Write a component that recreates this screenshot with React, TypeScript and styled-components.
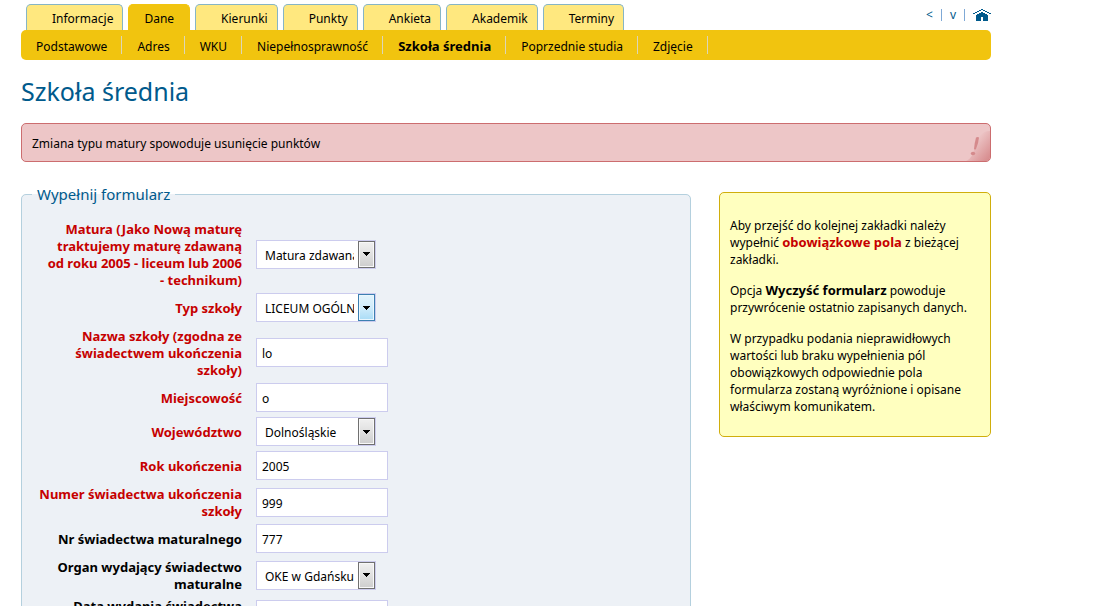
import React from 'react';
import styled, { createGlobalStyle } from 'styled-components';

const GlobalStyle = createGlobalStyle`
  *, *::before, *::after { box-sizing: border-box; }
  body {
    margin: 0;
    background: #fff;
    color: #000;
    font: 12px/17px Tahoma, "Noto Sans", sans-serif;
  }
  a { color: inherit; text-decoration: none; }
  strong { font-size: 13px; line-height: 1; }
`;

const Page = styled.div`
  padding: 4px 113px 24px 21px;
`;

const TopBar = styled.header`
  display: flex;
  justify-content: space-between;
  align-items: flex-start;
`;

const Tabs = styled.nav`
  display: flex;
  gap: 5px;
  padding-left: 5px;
`;

const Tab = styled.a<{ $active?: boolean }>`
  height: 26px;
  padding: ${p => (p.$active ? '5px 15px 0' : '5px 9px 0 25px')};
  border: 1px solid ${p => (p.$active ? '#f1c40f' : '#86b5c5')};
  border-bottom: 0;
  border-radius: 5px 5px 0 0;
  background: ${p => (p.$active ? '#f1c40f' : '#ffe87f')};
`;

const Tools = styled.nav`
  display: flex;
  align-items: center;
  gap: 8px;
  height: 22px;
  color: #005a8c;

  a { display: block; line-height: 12px; }
  a + a { padding-left: 8px; border-left: 1px solid #7fa9d6; }
`;

const SubNav = styled.nav`
  display: flex;
  align-items: center;
  height: 30px;
  border-radius: 5px;
  background: #f1c40f;
`;

const SubLink = styled.a<{ $active?: boolean }>`
  height: 18px;
  padding: 2px 14px 0 15px;
  border-right: 1px solid #dcd6b8;
  font-size: ${p => (p.$active ? '13px' : '12px')};
  font-weight: ${p => (p.$active ? 'bold' : 'normal')};
`;

const Title = styled.h1`
  margin: 15px 0 16px;
  color: #005a8c;
  font-size: 25px;
  font-weight: normal;
  line-height: 32px;
`;

const Alert = styled.div`
  display: flex;
  justify-content: space-between;
  height: 39px;
  border: 1px solid #cc6d6f;
  border-radius: 5px;
  background: #edc6c7;
  overflow: hidden;

  p { margin: 0; padding: 11px 10px 0; }
`;

const Columns = styled.div`
  display: flex;
  align-items: flex-start;
  gap: 28px;
  margin-top: 24px;
`;

const Form = styled.form`
  flex: 1;
  min-width: 0;
`;

const Fieldset = styled.fieldset`
  display: block;
  min-width: 0;
  margin: 0;
  padding: 17px 20px 20px 10px;
  border: 1px solid #b4d0de;
  border-radius: 5px;
  background: #edf1f6;
`;

const Legend = styled.legend`
  padding: 0 5px;
  color: #005a8c;
  font-size: 15px;
  line-height: 17px;
`;

const Rows = styled.div`
  display: grid;
  gap: 5px;
`;

const Row = styled.div`
  display: grid;
  grid-template-columns: 210px 1fr;
  align-items: center;
  gap: 14px;
`;

const Label = styled.label<{ $required?: boolean }>`
  margin-bottom: -1px;
  padding: 1px 0 0 6px;
  color: ${p => (p.$required ? '#c60000' : '#000')};
  font-size: 13px;
  font-weight: bold;
  text-align: right;
`;

const NoWrap = styled.span`
  white-space: nowrap;
`;

const TextInput = styled.input`
  width: 132px;
  height: 29px;
  padding: 2px 5px 0;
  border: 1px solid #ccccee;
  background: #fff;
  color: #000;
  font: inherit;
`;

const SelectBox = styled.div`
  position: relative;
  width: 120px;
  height: 29px;
`;

const Select = styled.select`
  appearance: none;
  width: 100%;
  height: 100%;
  padding: 2px 21px 0 8px;
  border: 1px solid #ccccee;
  border-radius: 0;
  background: #fff;
  color: #000;
  font: inherit;
`;

const Arrow = styled.span<{ $hot?: boolean }>`
  position: absolute;
  top: 1px;
  right: 1px;
  bottom: 1px;
  display: grid;
  place-items: center;
  width: 17px;
  border: 1px solid ${p => (p.$hot ? '#3c7fb1' : '#707070')};
  box-shadow: inset 0 0 0 1px ${p => (p.$hot ? '#eaf7fe' : '#f8f8f8')};
  background: ${p =>
    p.$hot
      ? 'linear-gradient(#e3f4fc, #d0ecfb 50%, #a9dcf6)'
      : 'linear-gradient(#f0f0f0, #e0e0e0 50%, #cdcdcd)'};
  pointer-events: none;
`;

const Hint = styled.aside`
  width: 272px;
  padding: 24px 10px 21px;
  border: 1px solid #d0ae0c;
  border-radius: 5px;
  background: #ffffbf;
  margin-top: 6px;

  p { margin: 0 0 14px; }
  p:last-child { margin-bottom: 0; }
`;

const Required = styled.strong`
  color: #c60000;
`;

const HomeIcon = () => (
  <svg width="18" height="12" viewBox="0 0 18 12" fill="#005a8c" shapeRendering="crispEdges" display="block">
    <path d="M8 0h2v1h2v1h2v1h2v1h2v1h-2v-1h-2v-1h-2v-1h-2v-1h-2v1h-2v1h-2v1h-2v1h-2v-1h2v-1h2v-1h2v-1h2z" />
    <path d="M8 3h2v1h2v1h2v1h1v6h-5v-4h-2v4h-5v-6h1v-1h2v-1h2z" />
  </svg>
);

const AlertIcon = () => (
  <svg width="24" height="37" viewBox="0 0 24 37">
    <defs>
      <linearGradient id="corner" x1="0.35" y1="0.35" x2="1" y2="1">
        <stop offset="0" stopColor="#edc6c7" />
        <stop offset="1" stopColor="#d58688" />
      </linearGradient>
    </defs>
    <path d="M0 37C5 35 7 30 9 23C11 14 15 7 24 7V37Z" fill="url(#corner)" />
    <path d="M10 13.5q2-1 3 0q-.5 6-3 11.500q-1 1-2 0q.5-6 2-11.500z" fill="#d58a8c" />
    <ellipse cx="7" cy="29.500" rx="2.200" ry="1.700" fill="#d58a8c" />
  </svg>
);

const tabs = ['Informacje', 'Dane', 'Kierunki', 'Punkty', 'Ankieta', 'Akademik', 'Terminy'];
const sections = ['Podstawowe', 'Adres', 'WKU', 'Niepełnosprawność', 'Szkoła średnia', 'Poprzednie studia', 'Zdjęcie'];

type Field = {
  id: string;
  label: React.ReactNode;
  value: string;
  required?: boolean;
  select?: boolean;
  hot?: boolean;
};

const fields: Field[] = [
  {
    id: 'matura',
    label: <>Matura (Jako Nową maturę traktujemy maturę zdawaną od roku 2005 - liceum lub 2006 <NoWrap>- technikum)</NoWrap></>,
    value: 'Matura zdawana',
    required: true,
    select: true,
  },
  { id: 'typ', label: 'Typ szkoły', value: 'LICEUM OGÓLNOKSZTAŁCĄCE', required: true, select: true, hot: true },
  { id: 'nazwa', label: 'Nazwa szkoły (zgodna ze świadectwem ukończenia szkoły)', value: 'lo', required: true },
  { id: 'miejscowosc', label: 'Miejscowość', value: 'o', required: true },
  { id: 'wojewodztwo', label: 'Województwo', value: 'Dolnośląskie', required: true, select: true },
  { id: 'rok', label: 'Rok ukończenia', value: '2005', required: true },
  { id: 'numer', label: 'Numer świadectwa ukończenia szkoły', value: '999', required: true },
  { id: 'nr-matura', label: 'Nr świadectwa maturalnego', value: '777' },
  { id: 'organ', label: 'Organ wydający świadectwo maturalne', value: 'OKE w Gdańsku', select: true },
  { id: 'data', label: 'Data wydania świadectwa maturalnego', value: '' },
];

export default function App() {
  return (
    <>
      <GlobalStyle />
      <Page>
        <TopBar>
          <Tabs>
            {tabs.map(t => (
              <Tab key={t} href="#" $active={t === 'Dane'}>{t}</Tab>
            ))}
          </Tabs>
          <Tools>
            <a href="#">&lt;</a>
            <a href="#">v</a>
            <a href="#" aria-label="Strona główna"><HomeIcon /></a>
          </Tools>
        </TopBar>
        <SubNav>
          {sections.map(s => (
            <SubLink key={s} href="#" $active={s === 'Szkoła średnia'}>{s}</SubLink>
          ))}
        </SubNav>
        <Title>Szkoła średnia</Title>
        <Alert role="alert">
          <p>Zmiana typu matury spowoduje usunięcie punktów</p>
          <AlertIcon />
        </Alert>
        <Columns>
          <Form>
            <Fieldset>
              <Legend>Wypełnij formularz</Legend>
              <Rows>
                {fields.map(f => (
                  <Row key={f.id}>
                    <Label htmlFor={f.id} $required={f.required}>{f.label}</Label>
                    {f.select ? (
                      <SelectBox>
                        <Select id={f.id}><option>{f.value}</option></Select>
                        <Arrow $hot={f.hot}>
                          <svg width="7" height="4" viewBox="0 0 7 4" shapeRendering="crispEdges">
                            <path d="M0 0h7v1h-1v1h-1v1h-1v1h-1v-1h-1v-1h-1v-1h-1z" />
                          </svg>
                        </Arrow>
                      </SelectBox>
                    ) : (
                      <TextInput id={f.id} defaultValue={f.value} />
                    )}
                  </Row>
                ))}
              </Rows>
            </Fieldset>
          </Form>
          <Hint>
            <p>Aby przejść do kolejnej zakładki należy wypełnić <Required>obowiązkowe pola</Required> z bieżącej zakładki.</p>
            <p>Opcja <strong>Wyczyść formularz</strong> powoduje przywrócenie ostatnio zapisanych danych.</p>
            <p>W przypadku podania nieprawidłowych wartości lub braku wypełnienia pól obowiązkowych odpowiednie pola formularza zostaną wyróżnione i opisane właściwym komunikatem.</p>
          </Hint>
        </Columns>
      </Page>
    </>
  );
}
